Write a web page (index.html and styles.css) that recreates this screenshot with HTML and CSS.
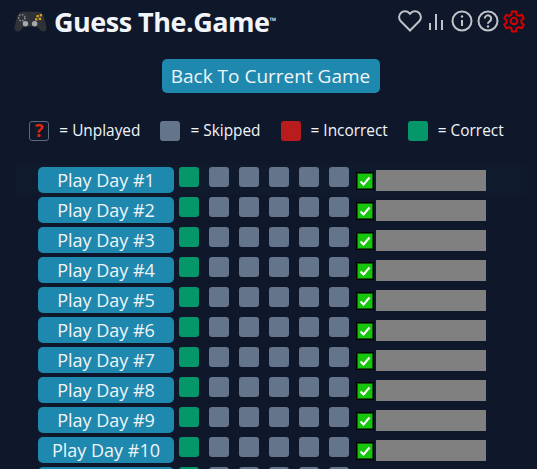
FILE: index.html
```html
<!DOCTYPE html>
<html lang="en">
<head>
    <meta charset="UTF-8">
    <meta name="viewport" content="width=device-width, initial-scale=1.0">
    <title>Guess The.Game</title>
    <link rel="stylesheet" href="styles.css">
</head>
<body>
    <header class="topbar">
        <h1 class="logo">
            <svg class="logo-pad" viewBox="0 0 36 28" width="33" height="26">
                <path d="M9 4h18c3 0 4.500 2 5.500 5l2.800 11c.8 3.500-1 5.500-3.300 5.500-2 0-3.500-1.200-5-3.500L25 20H11l-2 2c-1.500 2.300-3 3.500-5 3.500-2.300 0-4.100-2-3.300-5.500l2.800-11C4.500 6 6 4 9 4z" fill="#2f3236"/>
                <circle cx="8.500" cy="10.500" r="3.500" fill="none" stroke="#85898e" stroke-width="1.500" stroke-dasharray="2 1.200"/>
                <rect x="23" y="11" width="2.500" height="2.500" fill="#e0a514"/>
                <rect x="27" y="10.500" width="2.500" height="2.500" fill="#e0a514"/>
                <rect x="24.500" y="7.500" width="2.500" height="2.500" fill="#e0a514"/>
                <rect x="28" y="6.500" width="2.500" height="2.500" fill="#e0a514"/>
                <circle cx="12.500" cy="17" r="3" fill="#a5a8ac"/>
                <circle cx="22.500" cy="17" r="3" fill="#a5a8ac"/>
            </svg>
            <span>Guess The.Game</span><sup class="tm">™</sup>
        </h1>
        <nav class="icons">
            <svg class="icon heart" viewBox="0 0 24 24" width="24" height="24"><path d="M12 21.500 2.800 12.300A5.900 5.900 0 0 1 11.200 4L12 4.800l.8-.8a5.900 5.900 0 0 1 8.400 8.300z"/></svg>
            <svg class="icon bars" viewBox="0 0 16 24" width="16" height="24"><path d="M2 21v-7M8 21V5M14 21V11"/></svg>
            <svg class="icon info" viewBox="0 0 24 24" width="24" height="24"><circle cx="12" cy="12" r="9.500"/><path d="M12 11v6"/><circle class="dot" cx="12" cy="7.500" r="1.200"/></svg>
            <svg class="icon help" viewBox="0 0 24 24" width="24" height="24"><circle cx="12" cy="12" r="9.500"/><path d="M8.800 9.500a3.200 3.200 0 1 1 4.800 2.800c-1 .6-1.600 1.200-1.600 2.400"/><circle class="dot" cx="12" cy="17.500" r="1.200"/></svg>
            <svg class="icon gear" viewBox="0 0 24 24" width="24" height="24"><path d="M10 2.500h4l.6 3 2.200 1.300 2.900-1 2 3.400-2.300 2v2.600l2.300 2-2 3.400-2.900-1-2.200 1.300-.6 3h-4l-.6-3-2.200-1.300-2.900 1-2-3.400 2.300-2v-2.600l-2.300-2 2-3.400 2.900 1 2.200-1.300z"/><circle cx="12" cy="12" r="3.300"/></svg>
        </nav>
    </header>

    <div class="back-wrap">
        <button class="back-button">Back To Current Game</button>
    </div>

    <div class="legend">
        <div class="legend-item"><span class="square unplayed">?</span><span>= Unplayed</span></div>
        <div class="legend-item"><span class="square skipped"></span><span>= Skipped</span></div>
        <div class="legend-item"><span class="square incorrect"></span><span>= Incorrect</span></div>
        <div class="legend-item"><span class="square correct"></span><span>= Correct</span></div>
    </div>

    <div class="days" id="days"></div>
    <script src="days.js"></script>
</body>
</html>
```

FILE: styles.css
```css
html, body {
    height: 100%;
    overflow: hidden;
}
body {
    margin: 0;
    background-color: #0f172a;
    color: #f1f5f9;
    font-family: 'Open Sans', 'Noto Sans', sans-serif;
}
.topbar {
    display: flex;
    justify-content: space-between;
    align-items: center;
    height: 42px;
    padding: 0 11px 0 14px;
}
.logo {
    display: flex;
    align-items: center;
    margin: 0;
    font-size: 27px;
    font-weight: 700;
    letter-spacing: -0.5px;
    color: #f1f5f9;
}
.logo-pad {
    margin-right: 7px;
}
.tm {
    font-size: 9px;
    align-self: flex-start;
    margin: 13px 0 0 0;
    line-height: 1;
}
.icons {
    display: flex;
    align-items: center;
    gap: 2px;
}
.icon {
    fill: none;
    stroke: #c0c3c8;
    stroke-width: 2;
}
.icon .dot {
    fill: #c0c3c8;
    stroke: none;
}
.heart, .bars {
    margin-right: 4px;
}
.gear {
    stroke: #d40000;
}
.back-wrap {
    display: flex;
    justify-content: center;
    margin-top: 17px;
    padding-left: 4px;
}
.back-button {
    width: 218px;
    height: 34px;
    padding: 0;
    border: none;
    border-radius: 5px;
    background-color: #1f88ae;
    color: #f1f5f9;
    font-family: inherit;
    font-size: 19px;
}
.legend {
    display: flex;
    justify-content: center;
    gap: 20px;
    margin-top: 27px;
    padding-right: 4px;
    font-size: 15.4px;
}
.legend-item {
    display: flex;
    align-items: center;
    gap: 10px;
}
.square {
    display: block;
    width: 20px;
    height: 20px;
    border-radius: 3px;
    box-sizing: border-box;
}
.unplayed {
    border: 1px solid #5a6a80;
    color: #e0260c;
    font-size: 18px;
    font-weight: 700;
    line-height: 17px;
    text-align: center;
}
.skipped {
    background-color: #64748b;
}
.incorrect {
    background-color: #b91c1c;
}
.correct {
    background-color: #059669;
}
.days {
    margin: 24px 10px 0 15px;
}
.day-row {
    display: flex;
    align-items: flex-start;
    height: 26px;
    padding: 2px 0 2px 23px;
}
.day-row.current {
    background-color: #101a2d;
}
.play-button {
    width: 136px;
    height: 26px;
    padding: 0;
    border: none;
    border-radius: 5px;
    background-color: #1f88ae;
    color: #f1f5f9;
    font-family: inherit;
    font-size: 18px;
    line-height: 26px;
}
.guesses {
    display: flex;
    gap: 10px;
    margin-left: 5px;
}
.done-box {
    display: flex;
    justify-content: center;
    align-items: center;
    width: 18px;
    height: 18px;
    margin: 5px 2px 0 7px;
    box-sizing: border-box;
    border: 1px solid #000;
    box-shadow: inset 0 0 0 1px #0a5a08;
    background-color: #16c60c;
}
.done-box svg {
    fill: none;
    stroke: #fff;
    stroke-width: 2;
}
.share-bar {
    width: 110px;
    height: 21px;
    margin-top: 3px;
    background-color: #808080;
}
```

FILE: days.js
```js
let days = document.getElementById("days");

for (let i = 1; i <= 11; i++) {
    let row = document.createElement("div");
    row.className = i === 1 ? "day-row current" : "day-row";

    let html = '<button class="play-button">Play Day #' + i + '</button><div class="guesses">';
    html += '<span class="square correct"></span>';
    for (let j = 0; j < 5; j++) {
        html += '<span class="square skipped"></span>';
    }
    html += '</div><span class="done-box"><svg viewBox="0 0 12 12" width="12" height="12"><path d="M1.500 6.500 4.500 9.500 10.500 2.500"/></svg></span>';
    html += '<div class="share-bar"></div>';

    row.innerHTML = html;
    days.appendChild(row);
}
```
